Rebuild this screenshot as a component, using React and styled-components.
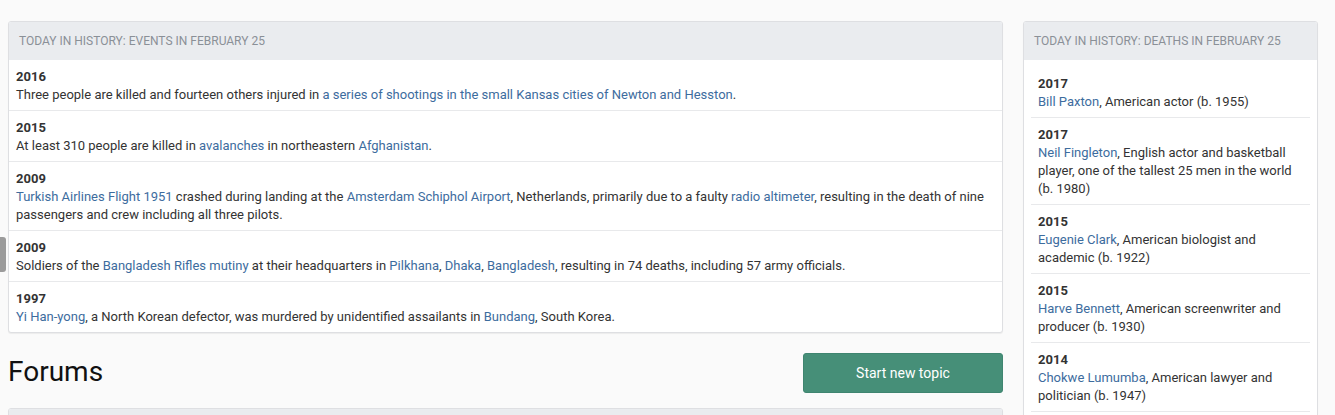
import React from 'react';
import styled, { createGlobalStyle } from 'styled-components';

const GlobalStyle = createGlobalStyle`
  body {
    margin: 0;
    background: #fafafa;
    font-family: Roboto, "Liberation Sans", sans-serif;
    color: #333;
  }
`;

const Page = styled.div`
  display: grid;
  grid-template-columns: 995px 295px;
  column-gap: 20px;
  align-items: start;
  padding: 21px 0 0 8px;
  height: 394px;
  overflow: hidden;
`;

const Panel = styled.div`
  background: #fff;
  border: 1px solid #dedfe2;
  border-radius: 3px;
  box-shadow: 0 1px 1px rgba(0, 0, 0, 0.06);
  overflow: hidden;
  min-height: ${p => (p.tall ? '420px' : '0')};
`;

const PanelHead = styled.div`
  background: #eaecef;
  color: #8a9097;
  font-size: 12px;
  text-transform: uppercase;
  height: 38px;
  line-height: 38px;
  padding: 0 10px;
`;

const List = styled.div`
  padding: ${p => (p.inset ? '7px 7px 0' : '0')};
`;

const Row = styled.div`
  padding: 8px 7px 6px;
  border-bottom: 1px solid #e8e9eb;
  font-size: 13px;
  line-height: 18px;
  &:last-child {
    border-bottom: ${p => (p.inset ? '1px solid #e8e9eb' : 'none')};
  }
`;

const Year = styled.div`
  font-weight: 700;
  color: #333;
`;

const Link = styled.a`
  color: #3d6c9e;
  text-decoration: none;
`;

const Main = styled.div`
  display: flex;
  flex-direction: column;
`;

const ForumBar = styled.div`
  display: flex;
  align-items: center;
  justify-content: space-between;
  padding: 20px 0 15px;
`;

const Title = styled.h2`
  margin: 0 0 4px;
  font-size: 28px;
  font-weight: 400;
  color: #111;
`;

const Button = styled.button`
  width: 200px;
  height: 40px;
  background: #468f78;
  border: 1px solid #3f8570;
  border-radius: 3px;
  color: #fff;
  font-family: inherit;
  font-size: 14px;
  cursor: pointer;
`;

const Handle = styled.div`
  position: absolute;
  left: 0;
  top: 237px;
  width: 6px;
  height: 35px;
  background: #9b9b9b;
  border-radius: 0 3px 3px 0;
`;

const events = [
  ['2016', ['Three people are killed and fourteen others injured in ', { l: 'a series of shootings in the small Kansas cities of Newton and Hesston' }, '.']],
  ['2015', ['At least 310 people are killed in ', { l: 'avalanches' }, ' in northeastern ', { l: 'Afghanistan' }, '.']],
  ['2009', [{ l: 'Turkish Airlines Flight 1951' }, ' crashed during landing at the ', { l: 'Amsterdam Schiphol Airport' }, ', Netherlands, primarily due to a faulty ', { l: 'radio altimeter' }, ', resulting in the death of nine passengers and crew including all three pilots.']],
  ['2009', ['Soldiers of the ', { l: 'Bangladesh Rifles mutiny' }, ' at their headquarters in ', { l: 'Pilkhana' }, ', ', { l: 'Dhaka' }, ', ', { l: 'Bangladesh' }, ', resulting in 74 deaths, including 57 army officials.']],
  ['1997', [{ l: 'Yi Han-yong' }, ', a North Korean defector, was murdered by unidentified assailants in ', { l: 'Bundang' }, ', South Korea.']],
];

const deaths = [
  ['2017', [{ l: 'Bill Paxton' }, ', American actor (b. 1955)']],
  ['2017', [{ l: 'Neil Fingleton' }, ', English actor and basketball player, one of the tallest 25 men in the world (b. 1980)']],
  ['2015', [{ l: 'Eugenie Clark' }, ', American biologist and academic (b. 1922)']],
  ['2015', [{ l: 'Harve Bennett' }, ', American screenwriter and producer (b. 1930)']],
  ['2014', [{ l: 'Chokwe Lumumba' }, ', American lawyer and politician (b. 1947)']],
];

function Text({ parts }) {
  return (
    <div>
      {parts.map((p, i) =>
        typeof p === 'string' ? <React.Fragment key={i}>{p}</React.Fragment> : <Link key={i} href="#">{p.l}</Link>
      )}
    </div>
  );
}

export default function App() {
  return (
    <>
      <GlobalStyle />
      <Handle />
      <Page>
        <Main>
          <Panel>
            <PanelHead>Today in History: Events in February 25</PanelHead>
            <List>
              {events.map(([y, parts], i) => (
                <Row key={i}>
                  <Year>{y}</Year>
                  <Text parts={parts} />
                </Row>
              ))}
            </List>
          </Panel>
          <ForumBar>
            <Title>Forums</Title>
            <Button>Start new topic</Button>
          </ForumBar>
          <Panel>
            <PanelHead />
          </Panel>
        </Main>
        <Panel tall>
          <PanelHead>Today in History: Deaths in February 25</PanelHead>
          <List inset>
            {deaths.map(([y, parts], i) => (
              <Row key={i} inset>
                <Year>{y}</Year>
                <Text parts={parts} />
              </Row>
            ))}
          </List>
        </Panel>
      </Page>
    </>
  );
}
